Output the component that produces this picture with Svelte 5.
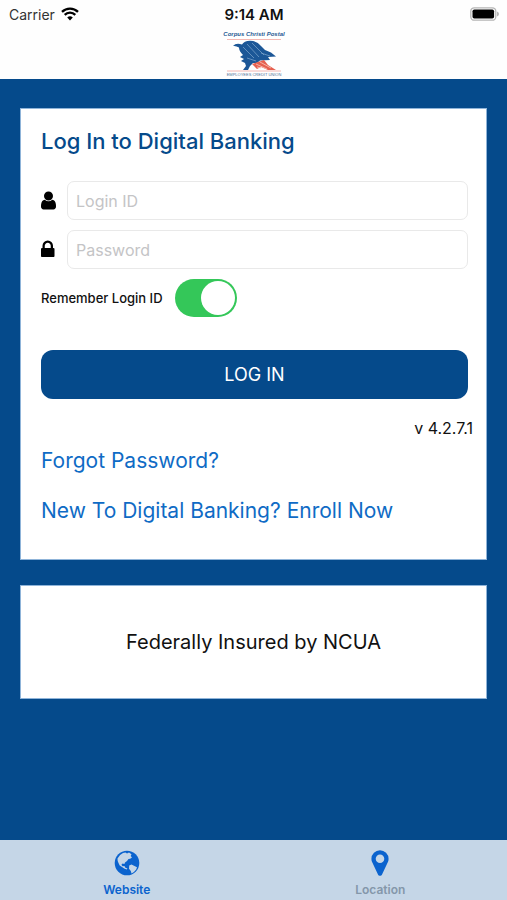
<script>
  let loginId = $state('');
  let password = $state('');
  let remember = $state(true);
</script>

<div class="screen">
  <header>
    <div class="status">
      <span class="carrier">
        Carrier
        <svg width="18" height="14" viewBox="0 0 18 14" aria-hidden="true">
          <path d="M9 13.6 6.2 10.6a4 4 0 0 1 5.600 0z" />
          <path d="M3.700 7.900a7.500 7.500 0 0 1 10.600 0M1 4.900a11.400 11.400 0 0 1 16 0" fill="none" stroke="#000" stroke-width="2.300" />
        </svg>
      </span>
      <strong>9:14 AM</strong>
      <span class="battery">
        <svg width="29" height="14" viewBox="0 0 29 14" aria-label="Battery full" role="img">
          <rect x="0.800" y="0.800" width="25" height="12.400" rx="3.500" fill="#fff" stroke="#b5b5b5" stroke-width="1.300" />
          <rect x="2.500" y="2.500" width="21.600" height="9" rx="1.800" />
          <path d="M27 4.600q2 .6 2 2.400t-2 2.400z" fill="#b5b5b5" />
        </svg>
      </span>
    </div>
    <svg class="logo" width="70" height="49" viewBox="0 0 70 49" role="img" aria-label="Corpus Christi Postal Employees Credit Union">
      <text x="35" y="7" text-anchor="middle" font-size="6" font-weight="700" font-style="italic" fill="#1f5a94">Corpus Christi Postal</text>
      <path d="M8 10.500h54M8 42h54" stroke="#f3b0aa" stroke-width="0.900" />
      <path d="M14 17Q17 13.500 23 15.500Q25 12 31 11.800Q38 12 42 17L46 21L52 23.500L57 27.500L49 28L51 31L41 31.500L38 34L34 34L31 37L29 41H24L27 37L26 34L22 32L25 30L21 28L24 26Q20 22 20 18.500Q17 16.500 14 17Z" fill="#1c5797" />
      <path d="m24 18 11 11M28 15l12 13M33 14l12 12M28 29l9 3M42 24l9 3" stroke="#82a9cf" stroke-width="0.700" />
      <path d="M33 35 45 31 49 36 57 41H49L42 38 38 40Z" fill="#e6604f" />
      <path d="m37 35 11 5M41 33l11 6M38 38l4 1" stroke="#f7c5bb" stroke-width="0.800" />
      <text x="35" y="47" text-anchor="middle" font-size="4" fill="#4f7399">EMPLOYEES CREDIT UNION</text>
    </svg>
  </header>

  <main>
    <section class="card login">
      <h1>Log In to Digital Banking</h1>
      <form onsubmit={(e) => e.preventDefault()}>
        <div class="field">
          <label for="login-id" aria-label="Login ID">
            <svg width="21" height="21" viewBox="256 0 1792 1792" aria-hidden="true"><path d="M1536 1399q0 109-62.500 187t-150.500 78h-854q-88 0-150.500-78t-62.500-187q0-85 8.500-160.500t31.500-152 58.500-131 94-89 134.500-34.500q131 128 313 128t313-128q76 0 134.500 34.500t94 89 58.500 131 31.500 152 8.500 160.500zm-256-887q0 159-112.500 271.500t-271.500 112.500-271.500-112.500-112.500-271.500 112.500-271.500 271.500-112.500 271.500 112.500 112.500 271.500z" /></svg>
          </label>
          <input id="login-id" type="text" placeholder="Login ID" bind:value={loginId} />
        </div>
        <div class="field">
          <label for="password" aria-label="Password">
            <svg width="21" height="21" viewBox="320 0 1792 1792" aria-hidden="true"><path d="M640 768h512v-192q0-106-75-181t-181-75-181 75-75 181v192zm832 96v576q0 40-28 68t-68 28h-960q-40 0-68-28t-28-68v-576q0-40 28-68t68-28h32v-192q0-184 132-316t316-132 316 132 132 316v192h32q40 0 68 28t28 68z" /></svg>
          </label>
          <input id="password" type="password" placeholder="Password" bind:value={password} />
        </div>
        <div class="remember">
          <label for="remember">Remember Login ID</label>
          <input id="remember" type="checkbox" role="switch" bind:checked={remember} />
        </div>
        <button type="submit">LOG IN</button>
      </form>
      <p class="version">v 4.2.7.1</p>
      <a href="#forgot">Forgot Password?</a>
      <a href="#enroll">New To Digital Banking? Enroll Now</a>
    </section>
    <section class="card insured">Federally Insured by NCUA</section>
  </main>

  <nav>
    <a class="active" href="#website">
      <svg width="26" height="26" viewBox="0 0 26 26" aria-hidden="true">
        <circle cx="13" cy="13" r="12.300" fill="#0b63ce" />
        <path d="M3.500 8.500Q5.500 4.500 9 3l2.500-.4 1.500 1 2-1 2.500 1.600-.8 1.800 1.300 1.500-1.800 1.300-1.700.2-1.500 2-2 1.500-.6 1.500-1.800-.6-1.200 1.400 1.200 1.400 1.800-.2 1 1.800 2 .8-.6.8-2.600-.8-2.200-1.600-2.300-1.400-1.200-2.600-.8-2zM15.200 15.500l2.300-1 2.500 1.200 3 1.500-.8 2.300q-1.800 2.600-4.700 4l-.7-2.500-1.800-2.200z" fill="#c5d6e7" />
      </svg>
      <span>Website</span>
    </a>
    <a href="#location">
      <svg width="30" height="30" viewBox="0 0 1792 1792" aria-hidden="true"><path fill="#0b63ce" d="M1152 640q0-106-75-181t-181-75-181 75-75 181 75 181 181 75 181-75 75-181zm256 0q0 109-33 179l-364 774q-16 33-47.500 52t-67.500 19-67.500-19-46.500-52l-365-774q-33-70-33-179 0-212 150-362t362-150 362 150 150 362z" /></svg>
      <span>Location</span>
    </a>
  </nav>
</div>

<style>
  :global(body) { margin: 0; }
  .screen {
    min-height: 100vh;
    display: flex;
    flex-direction: column;
    background: #054a8b;
    color: #111;
    font-family: Inter, "Liberation Sans", sans-serif;
  }
  .screen * { box-sizing: border-box; }
  header {
    background: #fefefe;
    display: flex;
    flex-direction: column;
    align-items: center;
    height: 79px;
  }
  .status {
    width: 100%;
    display: grid;
    grid-template-columns: 1fr auto 1fr;
    align-items: center;
    height: 28px;
    padding: 0 8px 0 9px;
    font-size: 14px;
  }
  .status strong { font-size: 15px; font-weight: 600; }
  .carrier { display: flex; align-items: center; gap: 6px; color: #333; }
  .battery { display: flex; justify-content: flex-end; }
  .logo { margin-top: 1px; font-family: "Liberation Sans", sans-serif; }
  main {
    flex: 1;
    display: flex;
    flex-direction: column;
    gap: 25px;
    padding: 29px 20px;
  }
  .card { background: #fff; border: 1px solid #8fb4d9; }
  .login {
    display: flex;
    flex-direction: column;
    padding: 16px 18px 31px 20px;
  }
  h1 {
    margin: 0 0 24px;
    font-size: 22px;
    line-height: 32px;
    font-weight: 500;
    color: #054a8b;
  }
  form { display: flex; flex-direction: column; }
  .field { display: flex; align-items: center; margin-bottom: 10px; }
  .field label { width: 26px; display: flex; }
  .field input {
    flex: 1;
    min-width: 0;
    height: 39px;
    padding: 0 8px;
    border: 1px solid #e9e9e9;
    border-radius: 7px;
    background: #fff;
    font: 16px/24px Inter, "Liberation Sans", sans-serif;
  }
  input::placeholder { color: #c4c4c6; opacity: 1; }
  .remember { display: flex; align-items: center; gap: 12px; font-size: 13px; font-weight: 500; }
  .remember input {
    appearance: none;
    width: 62px;
    height: 38px;
    margin: 0;
    padding: 2px;
    border-radius: 19px;
    background: #c9c9cc;
    display: flex;
  }
  .remember input::before {
    content: "";
    width: 34px;
    height: 34px;
    border-radius: 50%;
    background: #fff;
  }
  .remember input:checked { background: #34c759; justify-content: flex-end; }
  button {
    height: 49px;
    margin-top: 33px;
    border: 0;
    border-radius: 12px;
    background: #054a8b;
    color: #fff;
    font: 18px/24px Inter, "Liberation Sans", sans-serif;
  }
  .version {
    margin: 17px -5px 4px 0;
    text-align: right;
    font-size: 16px;
    line-height: 24px;
  }
  .login a {
    margin-bottom: 16px;
    font-size: 21px;
    line-height: 34px;
    color: #0f6bc5;
    text-decoration: none;
  }
  .login a:last-child { margin: 0; }
  .insured {
    padding: 40px 20px;
    text-align: center;
    font-size: 20px;
    line-height: 32px;
  }
  nav {
    display: flex;
    height: 60px;
    background: #c5d6e7;
  }
  nav a {
    flex: 1;
    display: flex;
    flex-direction: column;
    align-items: center;
    justify-content: space-between;
    padding: 8px 0 0;
    color: #8497aa;
    font-size: 12px;
    line-height: 20px;
    font-weight: 600;
    text-decoration: none;
  }
  nav a.active { padding-top: 10px; color: #0b63ce; }
</style>
